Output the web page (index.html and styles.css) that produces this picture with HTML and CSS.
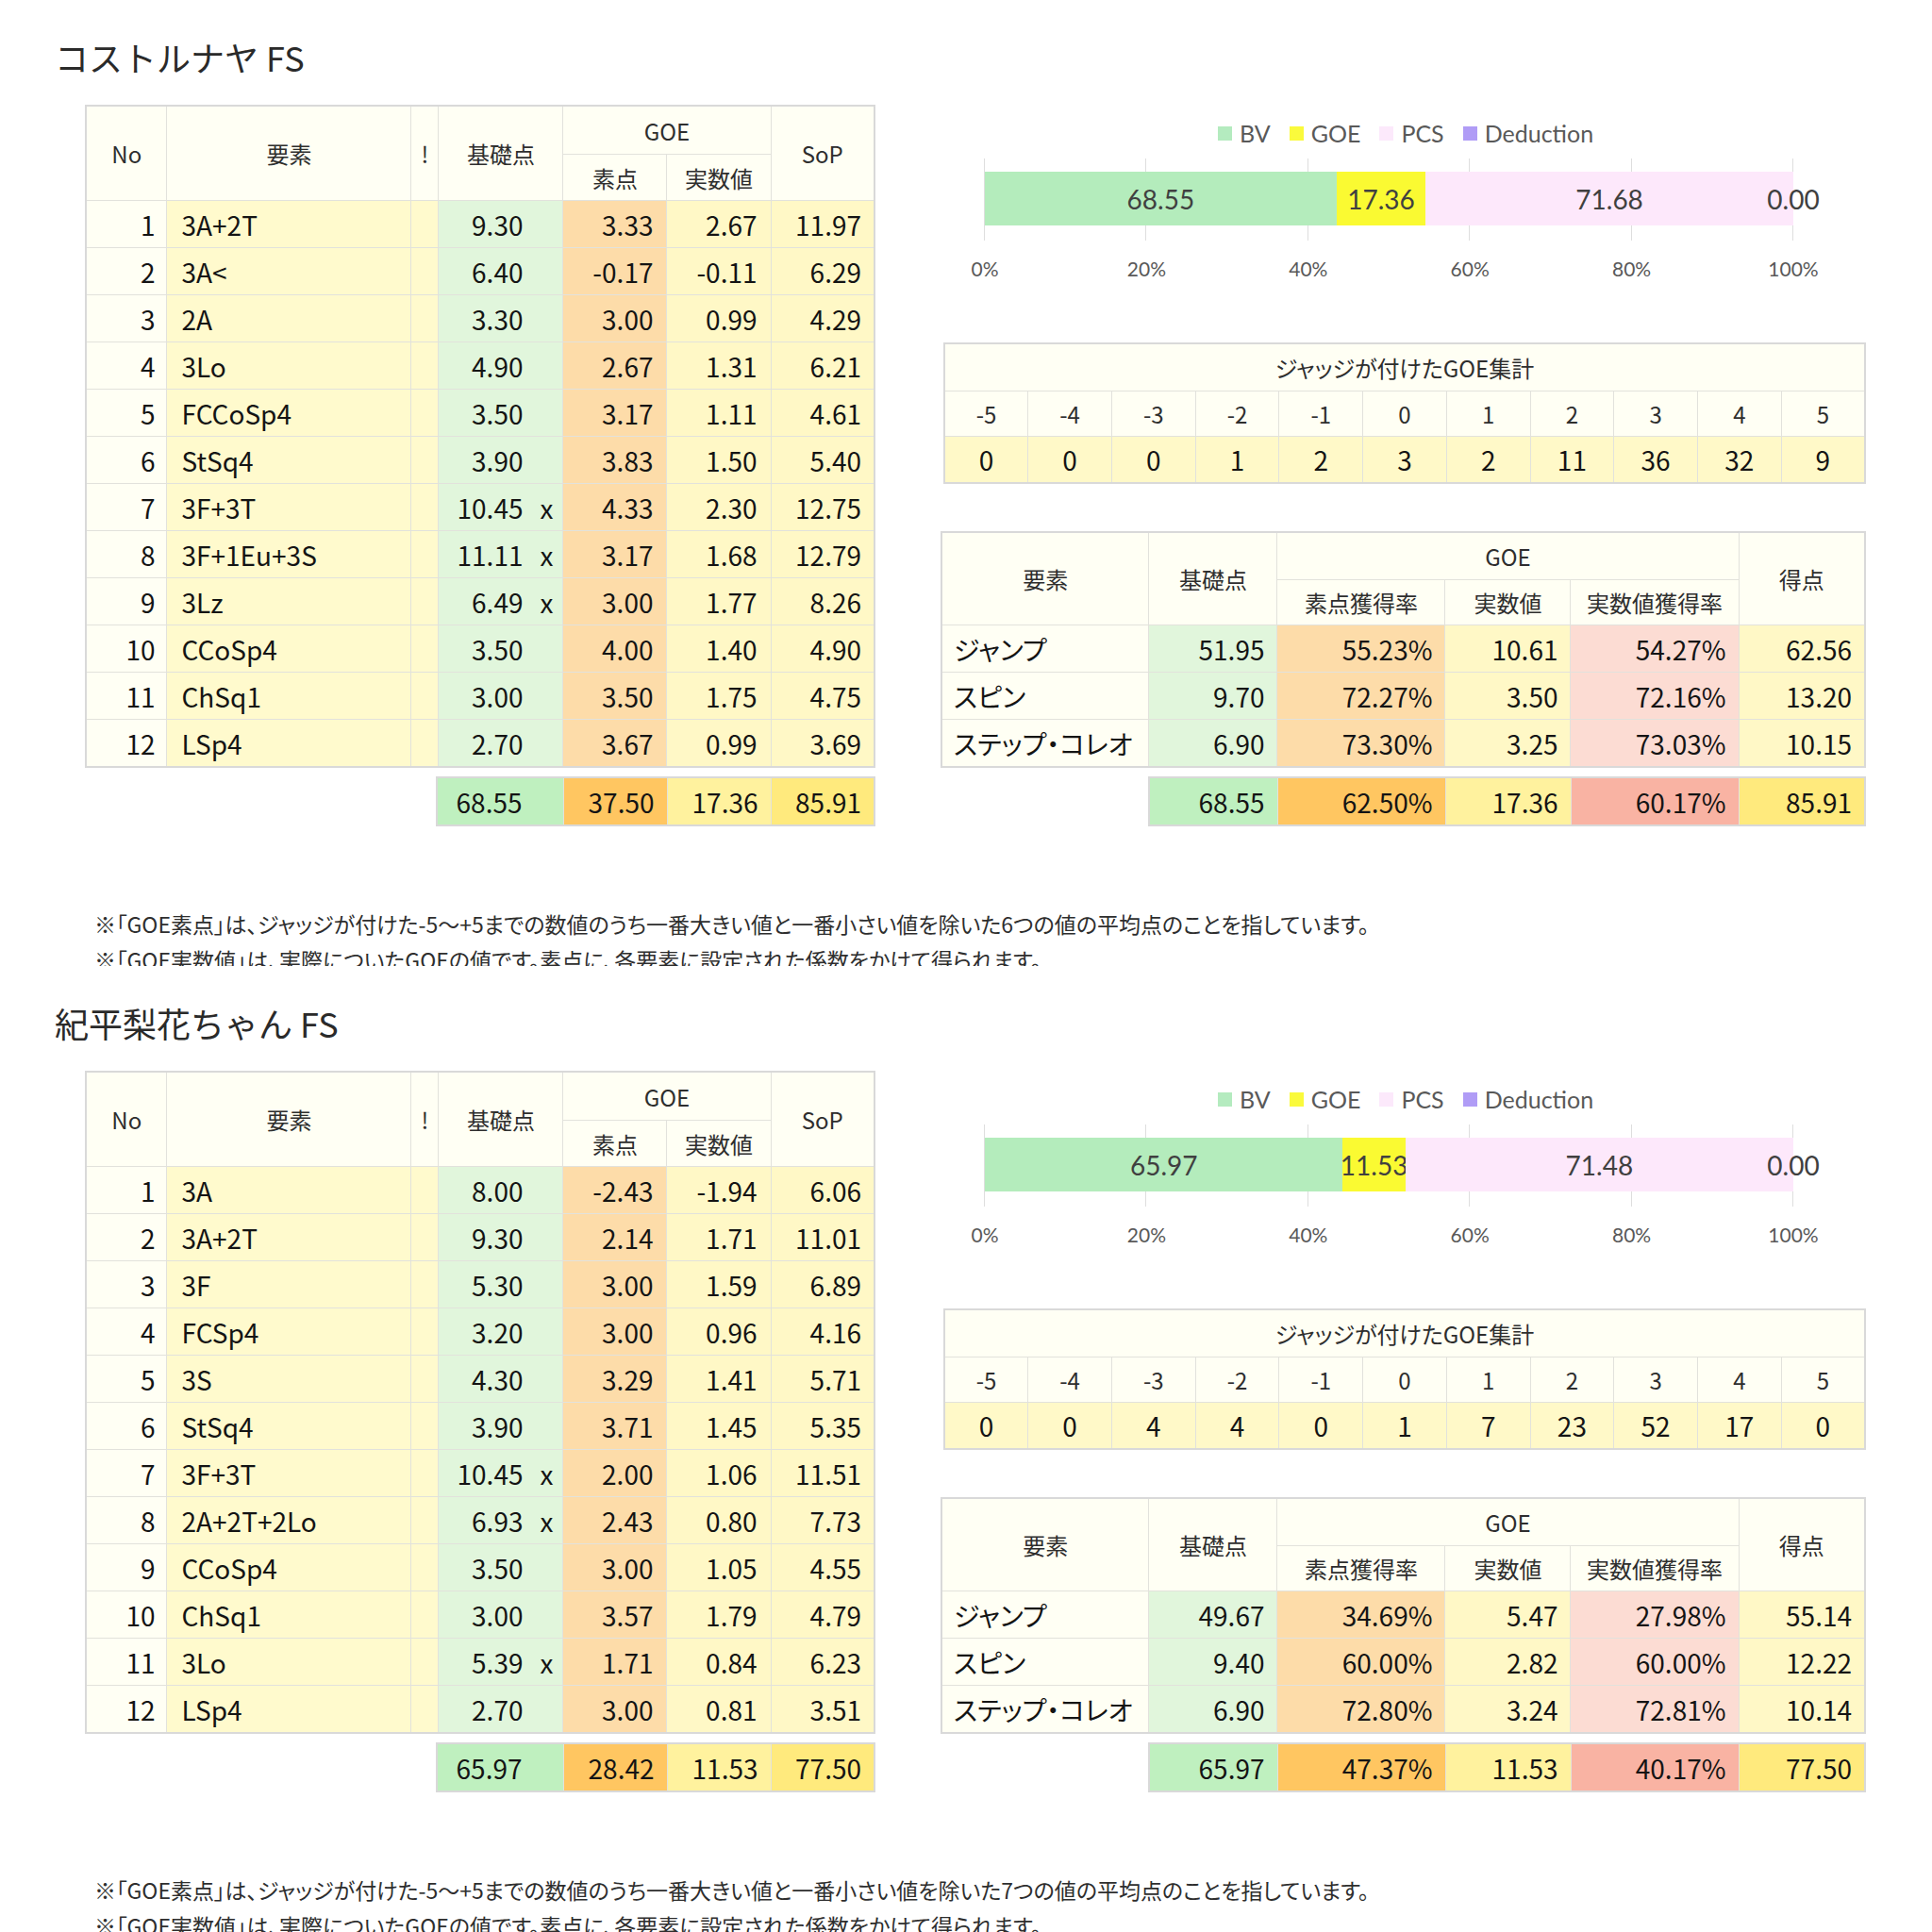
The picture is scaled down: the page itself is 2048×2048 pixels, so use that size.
FILE: index.html
```html
<!DOCTYPE html>
<html lang="ja">
<head>
<meta charset="utf-8">
<title>FS</title>
<link rel="stylesheet" href="styles.css">
</head>
<body>
<div class="page">

<section class="sec">
  <h2 class="title">コストルナヤ FS</h2>
  <div class="body">
    <div class="left">
      <table class="elems">
        <colgroup><col class="c-no"><col class="c-el"><col class="c-ex"><col class="c-bv"><col class="c-sg"><col class="c-rg"><col class="c-sop"></colgroup>
        <thead>
          <tr class="h1"><th rowspan="2">No</th><th rowspan="2">要素</th><th rowspan="2">!</th><th rowspan="2">基礎点</th><th colspan="2">GOE</th><th rowspan="2">SoP</th></tr>
          <tr class="h2"><th>素点</th><th>実数値</th></tr>
        </thead>
        <tbody>
          <tr><td class="no">1</td><td class="el">3A+2T</td><td class="ex"></td><td class="bv">9.30<span class="x"></span></td><td class="sg">3.33</td><td class="rg">2.67</td><td class="sop">11.97</td></tr>
          <tr><td class="no">2</td><td class="el">3A&lt;</td><td class="ex"></td><td class="bv">6.40<span class="x"></span></td><td class="sg">-0.17</td><td class="rg">-0.11</td><td class="sop">6.29</td></tr>
          <tr><td class="no">3</td><td class="el">2A</td><td class="ex"></td><td class="bv">3.30<span class="x"></span></td><td class="sg">3.00</td><td class="rg">0.99</td><td class="sop">4.29</td></tr>
          <tr><td class="no">4</td><td class="el">3Lo</td><td class="ex"></td><td class="bv">4.90<span class="x"></span></td><td class="sg">2.67</td><td class="rg">1.31</td><td class="sop">6.21</td></tr>
          <tr><td class="no">5</td><td class="el">FCCoSp4</td><td class="ex"></td><td class="bv">3.50<span class="x"></span></td><td class="sg">3.17</td><td class="rg">1.11</td><td class="sop">4.61</td></tr>
          <tr><td class="no">6</td><td class="el">StSq4</td><td class="ex"></td><td class="bv">3.90<span class="x"></span></td><td class="sg">3.83</td><td class="rg">1.50</td><td class="sop">5.40</td></tr>
          <tr><td class="no">7</td><td class="el">3F+3T</td><td class="ex"></td><td class="bv">10.45<span class="x">x</span></td><td class="sg">4.33</td><td class="rg">2.30</td><td class="sop">12.75</td></tr>
          <tr><td class="no">8</td><td class="el">3F+1Eu+3S</td><td class="ex"></td><td class="bv">11.11<span class="x">x</span></td><td class="sg">3.17</td><td class="rg">1.68</td><td class="sop">12.79</td></tr>
          <tr><td class="no">9</td><td class="el">3Lz</td><td class="ex"></td><td class="bv">6.49<span class="x">x</span></td><td class="sg">3.00</td><td class="rg">1.77</td><td class="sop">8.26</td></tr>
          <tr><td class="no">10</td><td class="el">CCoSp4</td><td class="ex"></td><td class="bv">3.50<span class="x"></span></td><td class="sg">4.00</td><td class="rg">1.40</td><td class="sop">4.90</td></tr>
          <tr><td class="no">11</td><td class="el">ChSq1</td><td class="ex"></td><td class="bv">3.00<span class="x"></span></td><td class="sg">3.50</td><td class="rg">1.75</td><td class="sop">4.75</td></tr>
          <tr><td class="no">12</td><td class="el">LSp4</td><td class="ex"></td><td class="bv">2.70<span class="x"></span></td><td class="sg">3.67</td><td class="rg">0.99</td><td class="sop">3.69</td></tr>
        </tbody>
      </table>
      <table class="tot tot-left">
        <colgroup><col class="tl-bv"><col class="tl-n"><col class="tl-n"><col class="tl-n"></colgroup>
        <tr><td class="t-bv">68.55</td><td class="t-sg">37.50</td><td class="t-rg">17.36</td><td class="t-sop">85.91</td></tr>
      </table>
    </div>

    <div class="right">
      <div class="chart">
        <div class="legend">
          <span class="lg"><i class="sw sw-bv"></i>BV</span>
          <span class="lg"><i class="sw sw-goe"></i>GOE</span>
          <span class="lg"><i class="sw sw-pcs"></i>PCS</span>
          <span class="lg"><i class="sw sw-ded"></i>Deduction</span>
        </div>
        <div class="plot">
          <i class="gl" style="left:0%"></i><i class="gl" style="left:20%"></i><i class="gl" style="left:40%"></i><i class="gl" style="left:60%"></i><i class="gl" style="left:80%"></i><i class="gl" style="left:100%"></i>
          <div class="bar">
            <div class="seg s-bv" style="width:43.50%">68.55</div>
            <div class="seg s-goe" style="width:11.02%">17.36</div>
            <div class="seg s-pcs" style="width:45.48%">71.68</div>
            <div class="seg s-ded"><span>0.00</span></div>
          </div>
        </div>
        <div class="axis">
          <span style="left:0%">0%</span><span style="left:20%">20%</span><span style="left:40%">40%</span><span style="left:60%">60%</span><span style="left:80%">80%</span><span style="left:100%">100%</span>
        </div>
      </div>

      <table class="goe">
        <tr class="g-title"><th colspan="11">ジャッジが付けたGOE集計</th></tr>
        <tr class="g-head"><th>-5</th><th>-4</th><th>-3</th><th>-2</th><th>-1</th><th>0</th><th>1</th><th>2</th><th>3</th><th>4</th><th>5</th></tr>
        <tr class="g-val"><td>0</td><td>0</td><td>0</td><td>1</td><td>2</td><td>3</td><td>2</td><td>11</td><td>36</td><td>32</td><td>9</td></tr>
      </table>

      <table class="sum">
        <colgroup><col class="s-el"><col class="s-bv"><col class="s-sr"><col class="s-rg"><col class="s-rr"><col class="s-pt"></colgroup>
        <thead>
          <tr class="h1"><th rowspan="2">要素</th><th rowspan="2">基礎点</th><th colspan="3">GOE</th><th rowspan="2">得点</th></tr>
          <tr class="h2"><th>素点獲得率</th><th>実数値</th><th>実数値獲得率</th></tr>
        </thead>
        <tbody>
          <tr><td class="el">ジャンプ</td><td class="bv">51.95</td><td class="sr">55.23%</td><td class="rg">10.61</td><td class="rr">54.27%</td><td class="pt">62.56</td></tr>
          <tr><td class="el">スピン</td><td class="bv">9.70</td><td class="sr">72.27%</td><td class="rg">3.50</td><td class="rr">72.16%</td><td class="pt">13.20</td></tr>
          <tr><td class="el">ステップ・コレオ</td><td class="bv">6.90</td><td class="sr">73.30%</td><td class="rg">3.25</td><td class="rr">73.03%</td><td class="pt">10.15</td></tr>
        </tbody>
      </table>
      <table class="tot tot-right">
        <colgroup><col class="s-bv"><col class="s-sr"><col class="s-rg"><col class="s-rr"><col class="s-pt"></colgroup>
        <tr><td class="t-bv">68.55</td><td class="t-sg">62.50%</td><td class="t-rg">17.36</td><td class="t-rr">60.17%</td><td class="t-sop">85.91</td></tr>
      </table>
    </div>
  </div>
  <div class="notes">
    <p>※「GOE素点」は、ジャッジが付けた-5～+5までの数値のうち一番大きい値と一番小さい値を除いた6つの値の平均点のことを指しています。</p>
    <p>※「GOE実数値」は、実際についたGOEの値です。素点に、各要素に設定された係数をかけて得られます。</p>
  </div>
</section>

<section class="sec">
  <h2 class="title">紀平梨花ちゃん FS</h2>
  <div class="body">
    <div class="left">
      <table class="elems">
        <colgroup><col class="c-no"><col class="c-el"><col class="c-ex"><col class="c-bv"><col class="c-sg"><col class="c-rg"><col class="c-sop"></colgroup>
        <thead>
          <tr class="h1"><th rowspan="2">No</th><th rowspan="2">要素</th><th rowspan="2">!</th><th rowspan="2">基礎点</th><th colspan="2">GOE</th><th rowspan="2">SoP</th></tr>
          <tr class="h2"><th>素点</th><th>実数値</th></tr>
        </thead>
        <tbody>
          <tr><td class="no">1</td><td class="el">3A</td><td class="ex"></td><td class="bv">8.00<span class="x"></span></td><td class="sg">-2.43</td><td class="rg">-1.94</td><td class="sop">6.06</td></tr>
          <tr><td class="no">2</td><td class="el">3A+2T</td><td class="ex"></td><td class="bv">9.30<span class="x"></span></td><td class="sg">2.14</td><td class="rg">1.71</td><td class="sop">11.01</td></tr>
          <tr><td class="no">3</td><td class="el">3F</td><td class="ex"></td><td class="bv">5.30<span class="x"></span></td><td class="sg">3.00</td><td class="rg">1.59</td><td class="sop">6.89</td></tr>
          <tr><td class="no">4</td><td class="el">FCSp4</td><td class="ex"></td><td class="bv">3.20<span class="x"></span></td><td class="sg">3.00</td><td class="rg">0.96</td><td class="sop">4.16</td></tr>
          <tr><td class="no">5</td><td class="el">3S</td><td class="ex"></td><td class="bv">4.30<span class="x"></span></td><td class="sg">3.29</td><td class="rg">1.41</td><td class="sop">5.71</td></tr>
          <tr><td class="no">6</td><td class="el">StSq4</td><td class="ex"></td><td class="bv">3.90<span class="x"></span></td><td class="sg">3.71</td><td class="rg">1.45</td><td class="sop">5.35</td></tr>
          <tr><td class="no">7</td><td class="el">3F+3T</td><td class="ex"></td><td class="bv">10.45<span class="x">x</span></td><td class="sg">2.00</td><td class="rg">1.06</td><td class="sop">11.51</td></tr>
          <tr><td class="no">8</td><td class="el">2A+2T+2Lo</td><td class="ex"></td><td class="bv">6.93<span class="x">x</span></td><td class="sg">2.43</td><td class="rg">0.80</td><td class="sop">7.73</td></tr>
          <tr><td class="no">9</td><td class="el">CCoSp4</td><td class="ex"></td><td class="bv">3.50<span class="x"></span></td><td class="sg">3.00</td><td class="rg">1.05</td><td class="sop">4.55</td></tr>
          <tr><td class="no">10</td><td class="el">ChSq1</td><td class="ex"></td><td class="bv">3.00<span class="x"></span></td><td class="sg">3.57</td><td class="rg">1.79</td><td class="sop">4.79</td></tr>
          <tr><td class="no">11</td><td class="el">3Lo</td><td class="ex"></td><td class="bv">5.39<span class="x">x</span></td><td class="sg">1.71</td><td class="rg">0.84</td><td class="sop">6.23</td></tr>
          <tr><td class="no">12</td><td class="el">LSp4</td><td class="ex"></td><td class="bv">2.70<span class="x"></span></td><td class="sg">3.00</td><td class="rg">0.81</td><td class="sop">3.51</td></tr>
        </tbody>
      </table>
      <table class="tot tot-left">
        <colgroup><col class="tl-bv"><col class="tl-n"><col class="tl-n"><col class="tl-n"></colgroup>
        <tr><td class="t-bv">65.97</td><td class="t-sg">28.42</td><td class="t-rg">11.53</td><td class="t-sop">77.50</td></tr>
      </table>
    </div>

    <div class="right">
      <div class="chart">
        <div class="legend">
          <span class="lg"><i class="sw sw-bv"></i>BV</span>
          <span class="lg"><i class="sw sw-goe"></i>GOE</span>
          <span class="lg"><i class="sw sw-pcs"></i>PCS</span>
          <span class="lg"><i class="sw sw-ded"></i>Deduction</span>
        </div>
        <div class="plot">
          <i class="gl" style="left:0%"></i><i class="gl" style="left:20%"></i><i class="gl" style="left:40%"></i><i class="gl" style="left:60%"></i><i class="gl" style="left:80%"></i><i class="gl" style="left:100%"></i>
          <div class="bar">
            <div class="seg s-bv" style="width:44.28%">65.97</div>
            <div class="seg s-goe" style="width:7.74%">11.53</div>
            <div class="seg s-pcs" style="width:47.98%">71.48</div>
            <div class="seg s-ded"><span>0.00</span></div>
          </div>
        </div>
        <div class="axis">
          <span style="left:0%">0%</span><span style="left:20%">20%</span><span style="left:40%">40%</span><span style="left:60%">60%</span><span style="left:80%">80%</span><span style="left:100%">100%</span>
        </div>
      </div>

      <table class="goe">
        <tr class="g-title"><th colspan="11">ジャッジが付けたGOE集計</th></tr>
        <tr class="g-head"><th>-5</th><th>-4</th><th>-3</th><th>-2</th><th>-1</th><th>0</th><th>1</th><th>2</th><th>3</th><th>4</th><th>5</th></tr>
        <tr class="g-val"><td>0</td><td>0</td><td>4</td><td>4</td><td>0</td><td>1</td><td>7</td><td>23</td><td>52</td><td>17</td><td>0</td></tr>
      </table>

      <table class="sum">
        <colgroup><col class="s-el"><col class="s-bv"><col class="s-sr"><col class="s-rg"><col class="s-rr"><col class="s-pt"></colgroup>
        <thead>
          <tr class="h1"><th rowspan="2">要素</th><th rowspan="2">基礎点</th><th colspan="3">GOE</th><th rowspan="2">得点</th></tr>
          <tr class="h2"><th>素点獲得率</th><th>実数値</th><th>実数値獲得率</th></tr>
        </thead>
        <tbody>
          <tr><td class="el">ジャンプ</td><td class="bv">49.67</td><td class="sr">34.69%</td><td class="rg">5.47</td><td class="rr">27.98%</td><td class="pt">55.14</td></tr>
          <tr><td class="el">スピン</td><td class="bv">9.40</td><td class="sr">60.00%</td><td class="rg">2.82</td><td class="rr">60.00%</td><td class="pt">12.22</td></tr>
          <tr><td class="el">ステップ・コレオ</td><td class="bv">6.90</td><td class="sr">72.80%</td><td class="rg">3.24</td><td class="rr">72.81%</td><td class="pt">10.14</td></tr>
        </tbody>
      </table>
      <table class="tot tot-right">
        <colgroup><col class="s-bv"><col class="s-sr"><col class="s-rg"><col class="s-rr"><col class="s-pt"></colgroup>
        <tr><td class="t-bv">65.97</td><td class="t-sg">47.37%</td><td class="t-rg">11.53</td><td class="t-rr">40.17%</td><td class="t-sop">77.50</td></tr>
      </table>
    </div>
  </div>
  <div class="notes">
    <p>※「GOE素点」は、ジャッジが付けた-5～+5までの数値のうち一番大きい値と一番小さい値を除いた7つの値の平均点のことを指しています。</p>
    <p>※「GOE実数値」は、実際についたGOEの値です。素点に、各要素に設定された係数をかけて得られます。</p>
  </div>
</section>

</div>
</body>
</html>
```

FILE: styles.css
```css
html, body {
  margin: 0;
  padding: 0;
  background: #ffffff;
}
body {
  font-family: "Noto Sans CJK JP", "Noto Sans", sans-serif;
  color: #141414;
  width: 2048px;
}
.page {
  display: flex;
  flex-direction: column;
}
.sec {
  height: 1024px;
  overflow: hidden;
}
.title {
  margin: 0;
  padding: 38px 0 0 58px;
  font-size: 36px;
  line-height: 44px;
  font-weight: 400;
  color: #2a2a2a;
}
.body {
  display: flex;
  align-items: flex-start;
  margin-top: 29px;
  padding-left: 92px;
  gap: 72px;
}
.left {
  display: flex;
  flex-direction: column;
  align-items: flex-end;
  width: 836px;
}
.right {
  display: flex;
  flex-direction: column;
  align-items: flex-end;
  width: 978px;
}

table {
  border-collapse: collapse;
  table-layout: fixed;
  font-feature-settings: "palt";
}
th, td {
  border: 1px solid #e2e2dc;
  padding: 0;
  white-space: nowrap;
}
th {
  font-weight: 400;
  font-size: 24px;
  color: #2e2e2e;
  background: #fffff4;
}
td {
  font-size: 28px;
  height: 49px;
}

/* element table */
.elems {
  width: 836px;
  border: 2px solid #d9d9d9;
}
.c-no { width: 86px; }
.c-el { width: 259px; }
.c-ex { width: 29px; }
.c-bv { width: 132px; }
.c-sg { width: 110px; }
.c-rg { width: 110px; }
.c-sop { width: 110px; }
.elems .h1 th { height: 50px; }
.elems .h2 th { height: 48px; }
.elems td.no { text-align: right; padding-right: 12px; background: #fffff4; }
.elems td.el { text-align: left; padding-left: 15px; background: #fffacd; }
.elems td.ex { background: #fffacd; }
.elems td.bv { text-align: right; padding-right: 2px; background: #e1f6dc; }
.elems td.sg { text-align: right; padding-right: 14px; background: #fddca9; }
.elems td.rg { text-align: right; padding-right: 14px; background: #fff8c6; }
.elems td.sop { text-align: right; padding-right: 13px; background: #fff8c6; }
.x {
  display: inline-block;
  width: 30px;
  margin-left: 10px;
  text-align: center;
}

/* totals */
.tot {
  margin-top: 9px;
  border: 2px solid #d9d9d9;
}
.tot td {
  text-align: right;
  padding-right: 13px;
  height: 49px;
}
.tot-left { width: 465px; }
.tl-bv { width: 134px; }
.tl-n { width: 110px; }
.tot-left td.t-bv { padding-right: 43px; }
.t-bv { background: #bff0bf; }
.t-sg { background: #ffc661; }
.t-rg { background: #fff29e; }
.t-sop { background: #ffea7d; }
.t-rr { background: #f9b3a3; }
.tot-right { width: 759px; }

/* chart */
.chart {
  width: 978px;
  display: flex;
  flex-direction: column;
}
.legend {
  margin-top: 15px;
  height: 30px;
  display: flex;
  justify-content: center;
  align-items: center;
  gap: 20px;
  padding-left: 2px;
  font-family: "Lato", "Noto Sans", sans-serif;
  font-size: 25px;
  color: #595959;
}
.lg {
  display: flex;
  align-items: center;
  gap: 8px;
}
.sw {
  display: inline-block;
  width: 15px;
  height: 15px;
}
.sw-bv { background: #b4ebbf; }
.sw-goe { background: #fafa3c; }
.sw-pcs { background: #fce9fb; }
.sw-ded { background: #b09cf6; }
.plot {
  position: relative;
  margin: 12px 0 0 44px;
  width: 857px;
  height: 87px;
}
.gl {
  position: absolute;
  top: 0;
  bottom: 0;
  width: 1px;
  margin-left: -1px;
  background: #dedede;
}
.bar {
  position: relative;
  margin-top: 14px;
  height: 57px;
  display: flex;
}
.seg {
  height: 100%;
  display: flex;
  align-items: center;
  justify-content: center;
  font-family: "Lato", "Noto Sans", sans-serif;
  font-size: 28px;
  color: #404040;
}
.s-bv { background: #b4ecbc; }
.s-goe { background: #fafa32; }
.s-pcs { background: #fde8fb; }
.s-ded { width: 0; position: relative; overflow: visible; }
.s-ded span { position: absolute; left: 0; top: 50%; transform: translate(-50%, -50%); }
.axis {
  position: relative;
  margin: 15px 0 0 44px;
  width: 857px;
  height: 30px;
  font-family: "Lato", "Noto Sans", sans-serif;
  font-size: 21px;
  color: #595959;
}
.axis span {
  position: absolute;
  top: 0;
  line-height: 30px;
  transform: translateX(-50%);
}

/* goe count table */
.goe {
  margin-top: 63px;
  width: 978px;
  border: 2px solid #d9d9d9;
}
.goe th, .goe td { text-align: center; }
.goe .g-title th { height: 49px; }
.goe .g-head th { height: 47px; }
.goe .g-val td { height: 48px; background: #fff9c8; }

/* summary table */
.sum {
  margin-top: 50px;
  width: 978px;
  border: 2px solid #d9d9d9;
}
.s-el { width: 220px; }
.s-bv { width: 136px; }
.s-sr { width: 178px; }
.s-rg { width: 133px; }
.s-rr { width: 178px; }
.s-pt { width: 134px; }
.sum .h1 th { height: 49px; }
.sum .h2 th { height: 47px; }
.sum td { text-align: right; padding-right: 13px; }
.sum td.el { text-align: left; padding-left: 12px; background: #fffff4; }
.sum td.bv { background: #e1f6dc; }
.sum td.sr { background: #fddca9; }
.sum td.rg { background: #fff8c6; }
.sum td.rr { background: #fcdcd3; }
.sum td.pt { background: #fff8c6; }

/* notes */
.notes {
  margin: 84px 0 0 100px;
  font-size: 23px;
  line-height: 38px;
  color: #2e2e2e;
  font-feature-settings: "palt";
}
.notes p { margin: 0; white-space: nowrap; }
```
